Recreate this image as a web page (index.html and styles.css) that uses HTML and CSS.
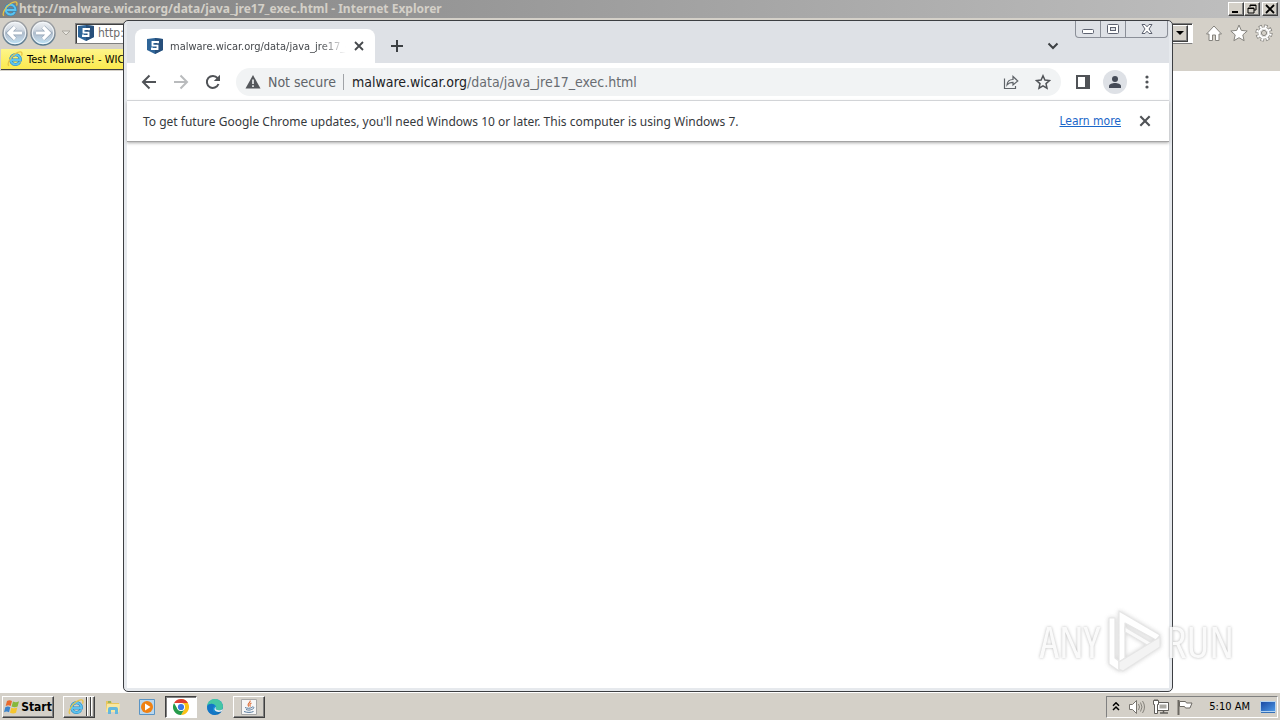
FILE: index.html
```html
<!DOCTYPE html>
<html lang="en">
<head>
<meta charset="utf-8">
<title>Desktop</title>
<link rel="stylesheet" href="styles.css">
</head>
<body>
<svg class="defs" aria-hidden="true">
  <defs>
    <linearGradient id="orb" x1="0" y1="0" x2="0" y2="1"><stop offset="0" stop-color="#f2f4f6"/><stop offset=".35" stop-color="#d3dae2"/><stop offset=".5" stop-color="#aebccb"/><stop offset=".75" stop-color="#bdd0e0"/><stop offset="1" stop-color="#b4e6fa"/></linearGradient>
    <linearGradient id="orbring" x1="0" y1="0" x2="0" y2="1"><stop offset="0" stop-color="#a2a4a6"/><stop offset=".5" stop-color="#8b929a"/><stop offset="1" stop-color="#55788f"/></linearGradient>
    <linearGradient id="edgeg" x1="0" y1="0" x2="1" y2="1"><stop offset="0" stop-color="#35c1b0"/><stop offset=".5" stop-color="#1790d8"/><stop offset="1" stop-color="#0c59a4"/></linearGradient>
    <linearGradient id="screen" x1="0" y1="0" x2="1" y2="1"><stop offset="0" stop-color="#1746a0"/><stop offset="1" stop-color="#4f9be8"/></linearGradient>
    <symbol id="ie" viewBox="0 0 16 16">
      <path d="M12.800 11A4.900 4.900 0 1 1 13.400 9H4.500" fill="none" stroke="#2a86bd" stroke-width="3"/>
      <path d="M12.800 11A4.900 4.900 0 1 1 13.400 9H4.500" fill="none" stroke="#5cc3f0" stroke-width="2"/>
      <path d="M2 14.800C-.4 13.500 3 6 8.500 2.500 12.500 0 16.200.2 14.600 4.600" fill="none" stroke="#e9c344" stroke-width="1.300"/>
    </symbol>
    <symbol id="shield" viewBox="0 0 16 16">
      <path d="M0 1 8 0l8 1v11l-8 4-8-4z" fill="#2f6598"/><path d="M8 0l8 1v11l-8 4z" fill="#274f7b"/>
      <path d="M11 5.300V4H5.500v3.600h5V11H5V9.600" fill="none" stroke="#fff" stroke-width="1.900"/>
    </symbol>
    <symbol id="cross" viewBox="0 0 12 12"><path d="M2 2l8 8M10 2l-8 8" fill="none" stroke="currentColor" stroke-width="1.800"/></symbol>
  </defs>
</svg>
<div class="desktop">
  <section class="ie">
    <header class="ie-title">
      <svg class="i16"><use href="#ie"/></svg>
      <h1>http://malware.wicar.org/data/java_jre17_exec.html - Internet Explorer</h1>
      <div class="ie-controls">
        <button class="classic" aria-label="Minimize"><svg viewBox="0 0 12 10"><path d="M2 8h6" stroke="#000" stroke-width="2"/></svg></button>
        <button class="classic" aria-label="Restore"><svg viewBox="0 0 12 10"><path d="M4 3V1h6v5H8M4 1.500h6M2 4h6v5H2zM2 4.500h6" fill="none" stroke="#000"/></svg></button>
        <button class="classic gap" aria-label="Close"><svg viewBox="0 0 12 10"><path d="M2 1l8 8M10 1L2 9" stroke="#000" stroke-width="1.800"/></svg></button>
      </div>
    </header>
    <div class="ie-bar">
      <button class="plain" aria-label="Back"><svg class="orb" viewBox="0 0 28 28"><circle cx="14" cy="14" r="12" fill="url(#orb)" stroke="url(#orbring)" stroke-width="1.500"/><circle cx="14" cy="14" r="10.700" fill="none" stroke="#f4f8fb"/><path d="M21 14H8m6-6-6 6 6 6" fill="none" stroke="#8fa0b2" stroke-width="4.500"/><path d="M21 14H8m6-6-6 6 6 6" fill="none" stroke="#fff" stroke-width="3.200"/></svg></button>
      <button class="plain" aria-label="Forward"><svg class="orb" viewBox="0 0 28 28"><circle cx="14" cy="14" r="12" fill="url(#orb)" stroke="url(#orbring)" stroke-width="1.500"/><circle cx="14" cy="14" r="10.700" fill="none" stroke="#f4f8fb"/><path d="M7 14h13m-6-6 6 6-6 6" fill="none" stroke="#8fa0b2" stroke-width="4.500"/><path d="M7 14h13m-6-6 6 6-6 6" fill="none" stroke="#fff" stroke-width="3.200"/></svg></button>
      <button class="plain recent" aria-label="Recent pages"><svg viewBox="0 0 10 6"><path d="M1 1h8L5 5z" fill="#e8e6e0" stroke="#aaa79f"/></svg></button>
      <div class="ie-address">
        <svg class="i16"><use href="#shield"/></svg>
        <input aria-label="Address" value="http:">
        <button class="classic drop" aria-label="Show addresses"><svg viewBox="0 0 8 8"><path d="M0 2h8L4 6z"/></svg></button>
      </div>
      <nav class="ie-tools">
        <button class="plain" aria-label="Home"><svg viewBox="0 0 18 18"><path d="M9 2l7.500 8H14v6.500h-3.500V11h-3v5.500H4V10H1.500z" fill="#fff" stroke="#85837e"/></svg></button>
        <button class="plain" aria-label="Favorites"><svg viewBox="0 0 18 18"><path d="M9 1l2.300 5.400 5.900.6-4.400 3.900 1.300 5.800L9 13.700l-5.100 3 1.300-5.800L.8 7l5.900-.6z" fill="#fff" stroke="#85837e"/></svg></button>
        <button class="plain" aria-label="Tools"><svg viewBox="0 0 18 18"><g fill="none"><circle cx="9" cy="9" r="6.600" stroke="#85837e" stroke-width="4" stroke-dasharray="3.200 1.980"/><circle cx="9" cy="9" r="5" fill="#fff" stroke="#85837e" stroke-width="2.500"/><circle cx="9" cy="9" r="6.600" stroke="#fff" stroke-width="2.400" stroke-dasharray="2 3.180" stroke-dashoffset="-.6"/><circle cx="9" cy="9" r="4.700" stroke="#fff" stroke-width="2"/><circle cx="9" cy="9" r="2.600" fill="#d4d0c8" stroke="#85837e"/></g></svg></button>
      </nav>
    </div>
    <div class="ie-tabs"><button class="ie-tab"><svg class="i16"><use href="#ie"/></svg>Test Malware! - WICAR.org</button></div>
    <main class="ie-page"></main>
  </section>

  <section class="chrome">
    <div class="win-controls">
      <button aria-label="Minimize"><svg viewBox="0 0 14 12"><rect x="1.500" y="6.500" width="11" height="4" rx="1" fill="#fff" stroke="#5d6270"/></svg></button>
      <button aria-label="Maximize"><svg viewBox="0 0 14 12"><rect x="1.500" y="1.500" width="11" height="9" rx="1" fill="#fff" stroke="#5d6270"/><rect x="4.500" y="4.500" width="5" height="3" fill="#dee1e6" stroke="#5d6270"/></svg></button>
      <button class="wide" aria-label="Close"><svg viewBox="0 0 14 12"><path d="M2 1.500h3l2 2.300 2-2.300h3L9 6l3 4.500H9L7 8.200 5 10.500H2L5 6z" fill="#fff" stroke="#5d6270"/></svg></button>
    </div>
    <div class="tabstrip">
      <div class="tab">
        <svg class="i16"><use href="#shield"/></svg>
        <span>malware.wicar.org/data/java_jre17_exec.html</span>
        <button class="plain" aria-label="Close tab"><svg class="i12"><use href="#cross"/></svg></button>
      </div>
      <button class="plain newtab" aria-label="New tab"><svg viewBox="0 0 12 12"><path d="M6 0v12M0 6h12" stroke="#3c4043" stroke-width="2"/></svg></button>
      <button class="plain search" aria-label="Search tabs"><svg viewBox="0 0 12 12"><path d="M1.500 3.500 6 8l4.500-4.500" fill="none" stroke="#3c4043" stroke-width="2"/></svg></button>
    </div>
    <div class="toolbar">
      <button class="plain" aria-label="Back"><svg viewBox="0 0 16 16"><path d="M15 8H2m6.500-6.500L2 8l6.500 6.500" fill="none" stroke="#505357" stroke-width="2"/></svg></button>
      <button class="plain" aria-label="Forward"><svg viewBox="0 0 16 16"><path d="M1 8h13M7.500 1.500 14 8l-6.500 6.500" fill="none" stroke="#b9bbbd" stroke-width="2"/></svg></button>
      <button class="plain" aria-label="Reload"><svg viewBox="0 0 16 16"><path d="M13.500 10A6 6 0 1 1 12.600 4.200" fill="none" stroke="#505357" stroke-width="2"/><path d="M15 .8V7H8.800z" fill="#505357"/></svg></button>
      <div class="omnibox">
        <svg class="i16 warn" viewBox="0 0 16 16"><path d="M8 1l7.500 13.500H.5z" fill="#54575b"/><path d="M8 5.500v4.500M8 11.300v1.700" stroke="#f1f3f4" stroke-width="1.600"/></svg>
        <span class="secure">Not secure</span>
        <div class="url" role="textbox" aria-label="Address and search bar" contenteditable="true" spellcheck="false">malware.wicar.org<span>/data/java_jre17_exec.html</span></div>
        <button class="plain" aria-label="Share"><svg viewBox="0 0 16 16"><path d="M1.500 4.500v10h11V12M4 11c.3-4 2.500-5.500 6-5.500V2.500L14.800 7 10 11V8.300C7.500 8.300 5.500 9 4 11z" fill="none" stroke="#5f6368" stroke-width="1.200"/></svg></button>
        <button class="plain" aria-label="Bookmark"><svg viewBox="0 0 16 16"><path d="M8 1.800l1.900 4.300 4.600.4-3.500 3.100 1 4.600L8 11.800l-4 2.400 1-4.600L1.500 6.500l4.600-.4z" fill="none" stroke="#505357" stroke-width="1.500"/></svg></button>
      </div>
      <button class="plain" aria-label="Side panel"><svg viewBox="0 0 16 16"><rect x="2" y="2" width="12" height="12" fill="none" stroke="#505357" stroke-width="2"/><path d="M10 2h4v12h-4z" fill="#505357"/></svg></button>
      <button class="plain avatar" aria-label="Profile"><svg viewBox="0 0 16 16"><circle cx="8" cy="5" r="3" fill="#454b57"/><path d="M2 14v-2c0-2 3.500-3 6-3s6 1 6 3v2z" fill="#454b57"/></svg></button>
      <button class="plain" aria-label="Menu"><svg viewBox="0 0 16 16" fill="#505357"><circle cx="8" cy="3" r="1.600"/><circle cx="8" cy="8" r="1.600"/><circle cx="8" cy="13" r="1.600"/></svg></button>
    </div>
    <div class="infobar">
      <p>To get future Google Chrome updates, you'll need Windows 10 or later. This computer is using Windows 7.</p>
      <a href="#">Learn more</a>
      <button class="plain" aria-label="Dismiss"><svg class="i14"><use href="#cross"/></svg></button>
    </div>
    <div class="page"></div>
  </section>

  <div class="watermark" role="img" aria-label="ANY RUN">
    <span>ANY</span>
    <svg viewBox="0 0 60 66"><g fill="#fff" stroke="#e2e2e2" stroke-width="1.200" stroke-linejoin="round"><path d="M12 10H6v46l10 7V53l-4-3z"/><path d="M16 3v51l6-4V15l31 17 4-5z"/><path d="M22 24l22 13 5-2-27-16z" fill="#fafafa"/><path d="M57 29 16 54v7l4 2 37-24z" fill="#f2f2f2"/></g></svg>
    <span>RUN</span>
  </div>

  <footer class="taskbar">
    <button class="classic start"><svg class="i16" viewBox="0 0 16 16"><path d="M3 2c2-1.300 3.500-.8 5 0L6.700 7c-1.500-.8-3-1-5 0z" fill="#e96a2c"/><path d="M9 2.500c2 .8 3.500 1 6-.2L13.600 7.500c-2 1-4 .8-6 0z" fill="#86b83b"/><path d="M1.300 8.300c2-1.200 3.600-.8 5 0L5 13.300c-1.500-.8-3-1-5 0z" fill="#3b84cc"/><path d="M7.300 8.700c2 .8 4 1 6-.1L12 13.700c-2 1-4 .8-6 0z" fill="#f5c52e"/></svg>Start</button>
    <button class="classic stack" aria-label="Internet Explorer"><svg viewBox="0 0 16 16"><use href="#ie"/></svg></button>
    <button class="plain task" aria-label="Explorer"><svg viewBox="0 0 16 16"><path d="M1 2h5l1 2h7v9H1z" fill="#e8c55c"/><path d="M2 5h13l-1 8H1z" fill="#f8e7a0"/><path d="M3 15v-5q0-2 2-2h6q2 0 2 2v5h-3v-4H6v4z" fill="#65b8dd"/><path d="M3 3h3" stroke="#4fa45a"/></svg></button>
    <button class="plain task" aria-label="Media Player"><svg viewBox="0 0 16 16"><path d="M.5.500h15v15H.500z" fill="#b9d7ee" stroke="#5a94c4"/><circle cx="8" cy="8" r="6" fill="#f08112"/><path d="M6 4.500 11.500 8 6 11.500z" fill="#fff"/></svg></button>
    <button class="classic task active" aria-label="Google Chrome"><svg viewBox="0 0 16 16"><path d="M8 8V0A8 8 0 0 1 14.930 4 8 8 0 0 1 8 16L11.500 10z" fill="#fbc116"/><path d="M1.070 4A8 8 0 0 1 14.930 4H8z" fill="#df3e31"/><path d="M1.070 4 4.500 10l7 0L8 16A8 8 0 0 1 1.070 4z" fill="#269b4b"/><circle cx="8" cy="8" r="4" fill="#fff"/><circle cx="8" cy="8" r="3.100" fill="#3b78e7"/></svg></button>
    <button class="plain task" aria-label="Edge"><svg viewBox="0 0 16 16"><circle cx="8" cy="8" r="8" fill="url(#edgeg)"/><path d="M.2 7C2 4 8 4 9 7.500 9.500 9 8.500 9.500 9 10.500c1.500 1.500 5 1.200 6.500-.5L16 7C15 2 11 0 8 0 4 0 .8 3 .2 7z" fill="#45c6a4"/><path d="M.2 7C2 4 7 4 8 7c-3 1-3 6 1 8.900C3 16.500-.5 12 .2 7z" fill="#1475c5"/><path d="M9 8c0 1-.8 1.500 0 2.500 2 1.200 5 1 7-.8l-1 2.500c-3 1.500-7 .8-7.500-1.700C7.300 9.500 8 8.500 9 8z" fill="#e6eef2"/></svg></button>
    <button class="classic task" aria-label="Java"><svg viewBox="0 0 16 16"><path d="M.5.500h15v15H.500z" fill="#f7f7f7" stroke="#a6a6a6"/><path d="M9 1.500c1.500 2-4 3.500-1 6M10.500 4c-2 1-2 2-1 3.500" fill="none" stroke="#dd6b35" stroke-width="1.100"/><path d="M4 8.500c2 1 5 1 7 0M5 10.500c2 .8 4 .8 5.500 0M3 12.500c3 1.200 7 1.200 9.500 0M11 8c3-.5 2 2-.5 2.500" fill="none" stroke="#54789c"/></svg></button>
    <div class="tray">
      <button class="plain" aria-label="Show hidden icons"><svg class="i10" viewBox="0 0 10 10"><path d="M2 3.800 5 .8l3 3M2 8l3-3 3 3" fill="none" stroke="#000" stroke-width="1.500"/></svg></button>
      <svg class="i16 sound" viewBox="0 0 16 16"><path d="M.5 5.500h3l4-4v13l-4-4h-3z" fill="#fff" stroke="#77746e"/><path d="M9.500 5q2 3 0 6M11.500 3.500q3 4.500 0 9M13.500 2q4 6 0 12" fill="none" stroke="#85827b"/></svg>
      <svg class="i16" viewBox="0 0 16 16"><path d="M4.500 3.500h11v8h-11z" fill="#fff" stroke="#5f5d59"/><path d="M6.500 5.500h7v4h-7z" fill="#aaa8a2"/><path d="M7 14h8M10.500 12v2" stroke="#5f5d59" stroke-width="1.500"/><path d="M.5 1.500h5v4h-1v9h-3v-9h-1zM2 0v2M4 0v2" fill="#fff" stroke="#5f5d59"/></svg>
      <svg class="i16 flag" viewBox="0 0 16 16"><path d="M1.500 1v15" stroke="#6c6963" stroke-width="2"/><path d="M2.500 2.500h6l1 1.500h5.500l-2 5H8.500l-1-1.500h-5z" fill="#fff" stroke="#6c6963"/></svg>
      <time>5:10 AM</time>
      <svg class="i16" viewBox="0 0 16 16"><path d="M.5 2.500h15v10h-15z" fill="url(#screen)" stroke="#b5d4f0"/><path d="M1 13.500h14" stroke="#3470b8"/></svg>
    </div>
  </footer>
</div>
</body>
</html>
```
FILE: styles.css
```css
* { box-sizing: border-box; }
body { margin: 0; font-family: "DejaVu Sans Condensed", "DejaVu Sans", sans-serif; font-size: 11px; color: #000; }
button { font: inherit; color: inherit; padding: 0; border: 0; background: none; display: flex; align-items: center; justify-content: center; flex: none; }
svg { display: block; flex: none; }
.defs { position: absolute; width: 0; height: 0; }
.i10 { width: 10px; height: 10px; }
.i12 { width: 12px; height: 12px; }
.i14 { width: 14px; height: 14px; }
.i16 { width: 16px; height: 16px; }
.desktop { position: relative; height: 100vh; display: flex; flex-direction: column; overflow: hidden; }
.classic { background: #d4d0c8; border: 1px solid; border-color: #fff #404040 #404040 #fff; box-shadow: inset -1px -1px #808080; }

.ie { flex: 1; display: flex; flex-direction: column; min-height: 0; background: #fff; }
.ie-title { display: flex; align-items: center; height: 18px; padding: 0 2px; gap: 1px; background: linear-gradient(90deg, #808080, #c0c0c0); }
.ie-title h1 { flex: 1; margin: 0; font-family: "Noto Sans", sans-serif; font-size: 12px; line-height: 16px; font-weight: bold; color: #d4d0c8; white-space: nowrap; }
.ie-controls { display: flex; }
.ie-controls button { width: 16px; height: 14px; }
.ie-controls .gap { margin-left: 2px; }
.ie-controls svg { width: 12px; height: 10px; }
.ie-bar { display: flex; align-items: center; height: 30px; padding: 0 7px 0 1px; background: #d4d0c8; }
.orb { width: 28px; height: 28px; }
.recent { width: 18px; }
.recent svg { width: 10px; height: 6px; }
.ie-address { flex: 1; display: flex; align-items: center; height: 21px; margin-right: 12px; background: #fff; border: 1px solid #808080; border-right-color: #fff; box-shadow: inset 1px 1px #404040; padding: 1px 4px 1px 2px; }
.ie-address input { flex: 1; min-width: 0; border: 0; padding: 0 4px; font: inherit; font-size: 12px; color: #6d6d6d; background: none; outline: 0; }
.drop { width: 16px; height: 17px; }
.drop svg { width: 8px; height: 8px; }
.ie-tools { display: flex; gap: 7px; }
.ie-tools svg { width: 18px; height: 18px; }
.ie-tabs { display: flex; height: 23px; padding: 1px; background: #d4d0c8; }
.ie-tab { width: 180px; gap: 4px; padding-left: 6px; justify-content: flex-start; background: linear-gradient(#fdf58a, #fbe94e); border-bottom: 1px solid #404040; white-space: nowrap; }
.ie-page { flex: 1; }

.chrome { position: absolute; top: 20px; left: 123px; right: 107px; bottom: 28px; display: flex; flex-direction: column; background: #e6e9ed; border: 1px solid #3c3e42; border-radius: 5px; padding: 0 3px 3px; }
.win-controls { position: absolute; top: 0; right: 4px; display: flex; border: 1px solid #8b8f98; border-top: 0; border-radius: 0 0 4px 4px; }
.win-controls button { width: 25px; height: 16px; border-right: 1px solid #8b8f98; }
.win-controls .wide { width: 41px; border: 0; }
.win-controls svg { width: 14px; height: 12px; }
.tabstrip { display: flex; align-items: flex-end; height: 42px; padding-left: 8px; background: #dee1e6; border-radius: 4px 4px 0 0; }
.tab { display: flex; align-items: center; width: 240px; height: 34px; padding: 0 10px 0 12px; gap: 7px; background: #fff; border-radius: 8px 8px 0 0; color: #45484c; }
.tab span { flex: 1; min-width: 0; overflow: hidden; white-space: nowrap; mask-image: linear-gradient(90deg, #000 85%, transparent); }
.newtab, .search { height: 34px; width: 44px; }
.newtab svg, .search svg { width: 12px; height: 12px; }
.search { margin-left: auto; margin-right: 94px; }
.toolbar { display: flex; align-items: center; height: 38px; padding: 0 6px; background: #fff; border-bottom: 1px solid #dadce0; }
.toolbar button { width: 32px; height: 28px; }
.toolbar svg { width: 16px; height: 16px; }
.omnibox { flex: 1; display: flex; align-items: center; min-width: 0; height: 28px; margin: 0 6px 0 7px; padding: 0 2px 0 9px; border-radius: 14px; background: #f1f3f4; font-size: 14px; color: #606469; white-space: nowrap; }
.secure { margin-left: 7px; padding-right: 7px; border-right: 1px solid #a0a3a7; }
.url { flex: 1; min-width: 0; padding-left: 8px; color: #202124; }
.url span { color: #686c71; }
.toolbar .avatar { width: 24px; height: 24px; margin: 0 4px; border-radius: 50%; background: #dee1e6; }
.infobar { display: flex; align-items: center; height: 41px; padding: 0 17px 0 16px; background: #fff; border-bottom: 1px solid #a4a4a4; box-shadow: 0 1px 3px #aaa; font-size: 12px; color: #36393d; z-index: 1; }
.infobar p { flex: 1; margin: 0; font-family: "Noto Sans", sans-serif; font-size: 12px; white-space: nowrap; }
.infobar a { color: #1a66c9; margin-right: 17px; white-space: nowrap; }
.infobar button { color: #505357; }
.page { flex: 1; background: #fff; }

.watermark { position: absolute; right: 46px; bottom: 46px; display: flex; align-items: center; gap: 3px; font-family: "Open Sans", sans-serif; font-stretch: condensed; font-size: 44px; opacity: .85; }
.watermark span { color: #fafafa; text-shadow: 0 0 3px #aaa; }
.watermark svg { width: 60px; height: 66px; filter: drop-shadow(0 0 2px #ccc); }

.taskbar { display: flex; align-items: center; height: 28px; padding: 2px; background: #d4d0c8; border-top: 1px solid #fff; }
.start { width: 52px; height: 22px; gap: 1px; font-size: 12px; font-weight: bold; margin-right: 9px; }
.stack { width: 32px; height: 22px; justify-content: flex-start; padding-left: 4px; border-right: 1px solid #404040; background: linear-gradient(90deg, transparent 22px, #404040 22px 23px, #fff 23px 24px, transparent 24px 26px, #404040 26px 27px, #fff 27px 28px, transparent 28px) #d4d0c8; }
.stack svg, .task svg { width: 16px; height: 16px; }
.task { width: 32px; height: 22px; margin-left: 2px; }
.active { background: #fff; border-color: #404040 #fff #fff #404040; box-shadow: inset 1px 1px #808080; }
.tray { display: flex; align-items: center; height: 22px; margin-left: auto; padding: 0 1px 0 4px; border: 1px solid; border-color: #808080 #fff #fff #808080; }
.sound { margin: 0 8px; }
.flag { margin-left: 8px; }
.tray time { margin: 0 10px 0 16px; }
```
